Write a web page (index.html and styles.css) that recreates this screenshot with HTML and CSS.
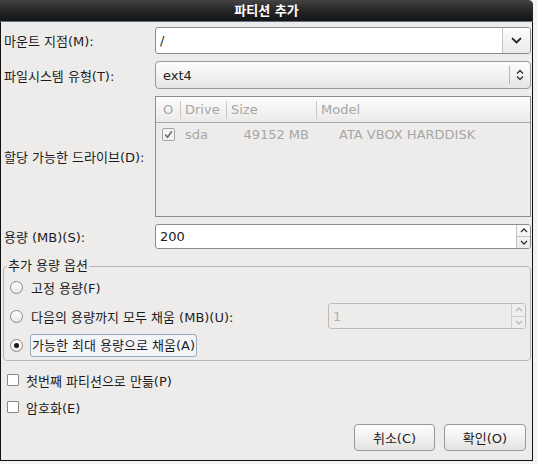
FILE: index.html
```html
<!DOCTYPE html>
<html lang="ko">
<head>
<meta charset="utf-8">
<title>파티션 추가</title>
<link rel="stylesheet" href="styles.css">
</head>
<body>
<div class="window">
  <div class="titlebar">파티션 추가</div>
  <div class="content">
    <div class="form">
      <label class="lbl">마운트 지점(M):</label>
      <div class="combo-entry">
        <span class="entry-text">/</span>
        <span class="combo-btn"><svg width="11" height="7" viewBox="0 0 11 7"><path d="M1 1.2 L5.5 5.5 L10 1.2" fill="none" stroke="#222" stroke-width="1.8"/></svg></span>
      </div>

      <label class="lbl">파일시스템 유형(T):</label>
      <div class="combo">
        <span class="combo-text">ext4</span>
        <span class="combo-sep"></span>
        <svg class="updown" width="8" height="12" viewBox="0 0 8 12"><path d="M1 4.5 L4 1.5 L7 4.5 M1 7.5 L4 10.5 L7 7.5" fill="none" stroke="#333" stroke-width="1.4"/></svg>
      </div>

      <label class="lbl">할당 가능한 드라이브(D):</label>
      <div class="list">
        <div class="list-head">
          <span class="hcell c1">O</span>
          <span class="hcell c2">Drive</span>
          <span class="hcell c3">Size</span>
          <span class="hcell c4">Model</span>
        </div>
        <div class="list-row">
          <span class="cell c1"><span class="lcheck"><svg width="9" height="9" viewBox="0 0 9 9"><path d="M1.2 4.6 L3.6 7.2 L7.8 1.2" fill="none" stroke="#6f6f6f" stroke-width="1.6"/></svg></span></span>
          <span class="cell c2">sda</span>
          <span class="cell c3">49152 MB</span>
          <span class="cell c4">ATA VBOX HARDDISK</span>
        </div>
      </div>

      <label class="lbl">용량 (MB)(S):</label>
      <div class="spin">
        <span class="spin-text">200</span>
        <span class="spin-btns">
          <span class="sb"><svg width="8" height="5" viewBox="0 0 8 5"><path d="M1 4 L4 1 L7 4" fill="none" stroke="#333" stroke-width="1.3"/></svg></span>
          <span class="sb sb-down"><svg width="8" height="5" viewBox="0 0 8 5"><path d="M1 1 L4 4 L7 1" fill="none" stroke="#333" stroke-width="1.3"/></svg></span>
        </span>
      </div>
    </div>

    <fieldset class="frame">
      <legend>추가 용량 옵션</legend>
      <div class="opt"><span class="radio"></span><span class="opt-label">고정 용량(F)</span></div>
      <div class="opt">
        <span class="radio"></span><span class="opt-label">다음의 용량까지 모두 채움 (MB)(U):</span>
        <div class="spin spin-off">
          <span class="spin-text">1</span>
          <span class="spin-btns">
            <span class="sb"><svg width="8" height="5" viewBox="0 0 8 5"><path d="M1 4 L4 1 L7 4" fill="none" stroke="#b4b4b4" stroke-width="1.2"/></svg></span>
            <span class="sb sb-down"><svg width="8" height="5" viewBox="0 0 8 5"><path d="M1 1 L4 4 L7 1" fill="none" stroke="#b4b4b4" stroke-width="1.2"/></svg></span>
          </span>
        </div>
      </div>
      <div class="opt"><span class="radio checked"></span><span class="opt-label focus">가능한 최대 용량으로 채움(A)</span></div>
    </fieldset>

    <div class="check-row"><span class="check"></span><span>첫번째 파티션으로 만듦(P)</span></div>
    <div class="check-row second"><span class="check"></span><span>암호화(E)</span></div>

    <div class="buttons">
      <button class="btn cancel">취소(C)</button>
      <button class="btn ok">확인(O)</button>
    </div>
  </div>
</div>
</body>
</html>
```

FILE: styles.css
```css
html, body {
  margin: 0;
  padding: 0;
}
body {
  background: #f3f3f3;
  font-family: "DejaVu Sans", "Noto Sans CJK KR", sans-serif;
  font-size: 13px;
  color: #1c1c1c;
  width: 537px;
  height: 464px;
  overflow: hidden;
}
.window {
  width: 533px;
  height: 461px;
  box-sizing: border-box;
  border: 1px solid #121212;
  border-top: none;
  border-top-right-radius: 5px;
  background: #edeceb;
  display: flex;
  flex-direction: column;
}
.titlebar {
  height: 21px;
  line-height: 21px;
  margin: 0 -1px;
  background: linear-gradient(#444444, #262626 50%, #151515);
  border-bottom: 1px solid #5f7186;
  border-top-right-radius: 5px;
  color: #ffffff;
  font-weight: bold;
  text-align: center;
}
.content {
  flex: 1;
  padding: 5px 1px 9px 3px;
  display: flex;
  flex-direction: column;
}
.form {
  display: grid;
  grid-template-columns: 151px 1fr;
  row-gap: 7px;
}
.lbl {
  align-self: center;
  white-space: nowrap;
}

/* combo entry */
.combo-entry {
  height: 27px;
  box-sizing: border-box;
  border: 1px solid #8d8c8a;
  border-radius: 3px;
  background: #ffffff;
  display: flex;
  align-items: center;
}
.entry-text {
  flex: 1;
  padding-left: 4px;
}
.combo-btn {
  width: 27px;
  align-self: stretch;
  border-left: 1px solid #c4c3c1;
  background: linear-gradient(#fdfdfd, #eceae8);
  border-radius: 0 2px 2px 0;
  display: flex;
  align-items: center;
  justify-content: center;
}

/* combo button */
.combo {
  height: 28px;
  box-sizing: border-box;
  border: 1px solid #9a9997;
  border-radius: 4px;
  background: linear-gradient(#fdfdfd, #f3f2f1 50%, #e6e5e3);
  display: flex;
  align-items: center;
  padding-left: 7px;
}
.combo-text {
  flex: 1;
}
.combo-sep {
  width: 1px;
  height: 18px;
  background: #b5b4b2;
  margin-right: 6px;
}
.updown {
  margin-right: 6px;
}

/* drive list */
.list {
  height: 121px;
  box-sizing: border-box;
  border: 1px solid #8f8e8c;
  background: #edeceb;
  color: #a6a6a6;
}
.list-head {
  height: 26px;
  box-sizing: border-box;
  border-bottom: 1px solid #a9a8a6;
  background: linear-gradient(#fdfdfd, #ebeae8);
  display: flex;
  align-items: center;
}
.hcell {
  height: 18px;
  line-height: 18px;
  padding-left: 4px;
  box-sizing: border-box;
}
.hcell + .hcell {
  border-left: 1px solid #c9c8c6;
}
.c1 { width: 24px; }
.c2 { width: 46px; }
.c3 { width: 90px; }
.c4 { flex: 1; }
.hcell.c1 { padding-left: 7px; }
.list-row {
  height: 22px;
  display: flex;
  align-items: center;
}
.cell {
  box-sizing: border-box;
  white-space: nowrap;
}
.cell.c1 {
  padding-left: 6px;
  display: flex;
}
.cell.c2 { padding-left: 5px; }
.cell.c3 { text-align: right; padding-right: 7px; }
.cell.c4 { padding-left: 23px; }
.lcheck {
  width: 13px;
  height: 13px;
  box-sizing: border-box;
  border: 1px solid #a5a4a2;
  border-radius: 2px;
  background: #f4f3f2;
  display: flex;
  align-items: center;
  justify-content: center;
}

/* spin button */
.spin {
  height: 25px;
  box-sizing: border-box;
  border: 1px solid #8d8c8a;
  border-radius: 3px;
  background: #ffffff;
  display: flex;
  align-items: center;
}
.spin-text {
  flex: 1;
  padding-left: 4px;
}
.spin-btns {
  width: 13px;
  align-self: stretch;
  border-left: 1px solid #c4c3c1;
  background: linear-gradient(#fdfdfd, #ebeae8);
  border-radius: 0 2px 2px 0;
  display: flex;
  flex-direction: column;
}
.sb {
  flex: 1;
  display: flex;
  align-items: center;
  justify-content: center;
}
.sb-down {
  border-top: 1px solid #c4c3c1;
}
.spin-off {
  width: 198px;
  height: 26px;
  margin-left: auto;
  border-color: #bdbcba;
  background: #edeceb;
  color: #b0b0b0;
}
.spin-off .spin-btns {
  background: #efeeed;
  border-left-color: #d2d1cf;
}
.spin-off .sb-down {
  border-top-color: #d2d1cf;
}

/* frame */
.frame {
  margin: 9px 0 0 -1px;
  padding: 0 4px 2px 6px;
  border: 1px solid #b6b5b3;
  border-radius: 4px;
  min-width: 0;
  display: flex;
  flex-direction: column;
  gap: 3px;
}
.frame legend {
  margin-left: -3px;
  padding: 0 1px;
  line-height: 16px;
}
.opt {
  height: 26px;
  display: flex;
  align-items: center;
}
.radio {
  width: 13px;
  height: 13px;
  box-sizing: border-box;
  border: 1px solid #8a8987;
  border-radius: 50%;
  background: linear-gradient(#ffffff, #e9e8e6);
  margin-right: 8px;
  flex: none;
  display: flex;
  align-items: center;
  justify-content: center;
}
.radio.checked {
  margin-right: 7px;
}
.radio.checked::after {
  content: "";
  width: 5px;
  height: 5px;
  border-radius: 50%;
  background: #1a1a1a;
}
.opt-label {
  white-space: nowrap;
}
.focus {
  height: 23px;
  line-height: 21px;
  box-sizing: border-box;
  padding: 0 1px;
  border: 1px solid #9aaac0;
  border-radius: 3px;
  background: #f3f5f8;
}

/* check rows */
.check-row {
  height: 22px;
  margin-top: 8px;
  display: flex;
  align-items: center;
}
.check-row.second {
  margin-top: 5px;
}
.check {
  width: 12px;
  height: 12px;
  box-sizing: border-box;
  border: 1px solid #8a8987;
  border-radius: 1px;
  background: #ffffff;
  margin: 0 7px 0 3px;
  flex: none;
}

/* buttons */
.buttons {
  margin-top: 6px;
  display: flex;
  justify-content: flex-end;
  gap: 9px;
  padding-right: 5px;
}
.btn {
  height: 27px;
  box-sizing: border-box;
  border: 1px solid #999896;
  border-radius: 4px;
  background: linear-gradient(#fdfdfd, #f2f1f0 50%, #e3e2e0);
  font-family: "DejaVu Sans", "Noto Sans CJK KR", sans-serif;
  font-size: 13px;
  color: #1c1c1c;
  padding: 0;
}
.cancel { width: 81px; }
.ok { width: 82px; }
```
